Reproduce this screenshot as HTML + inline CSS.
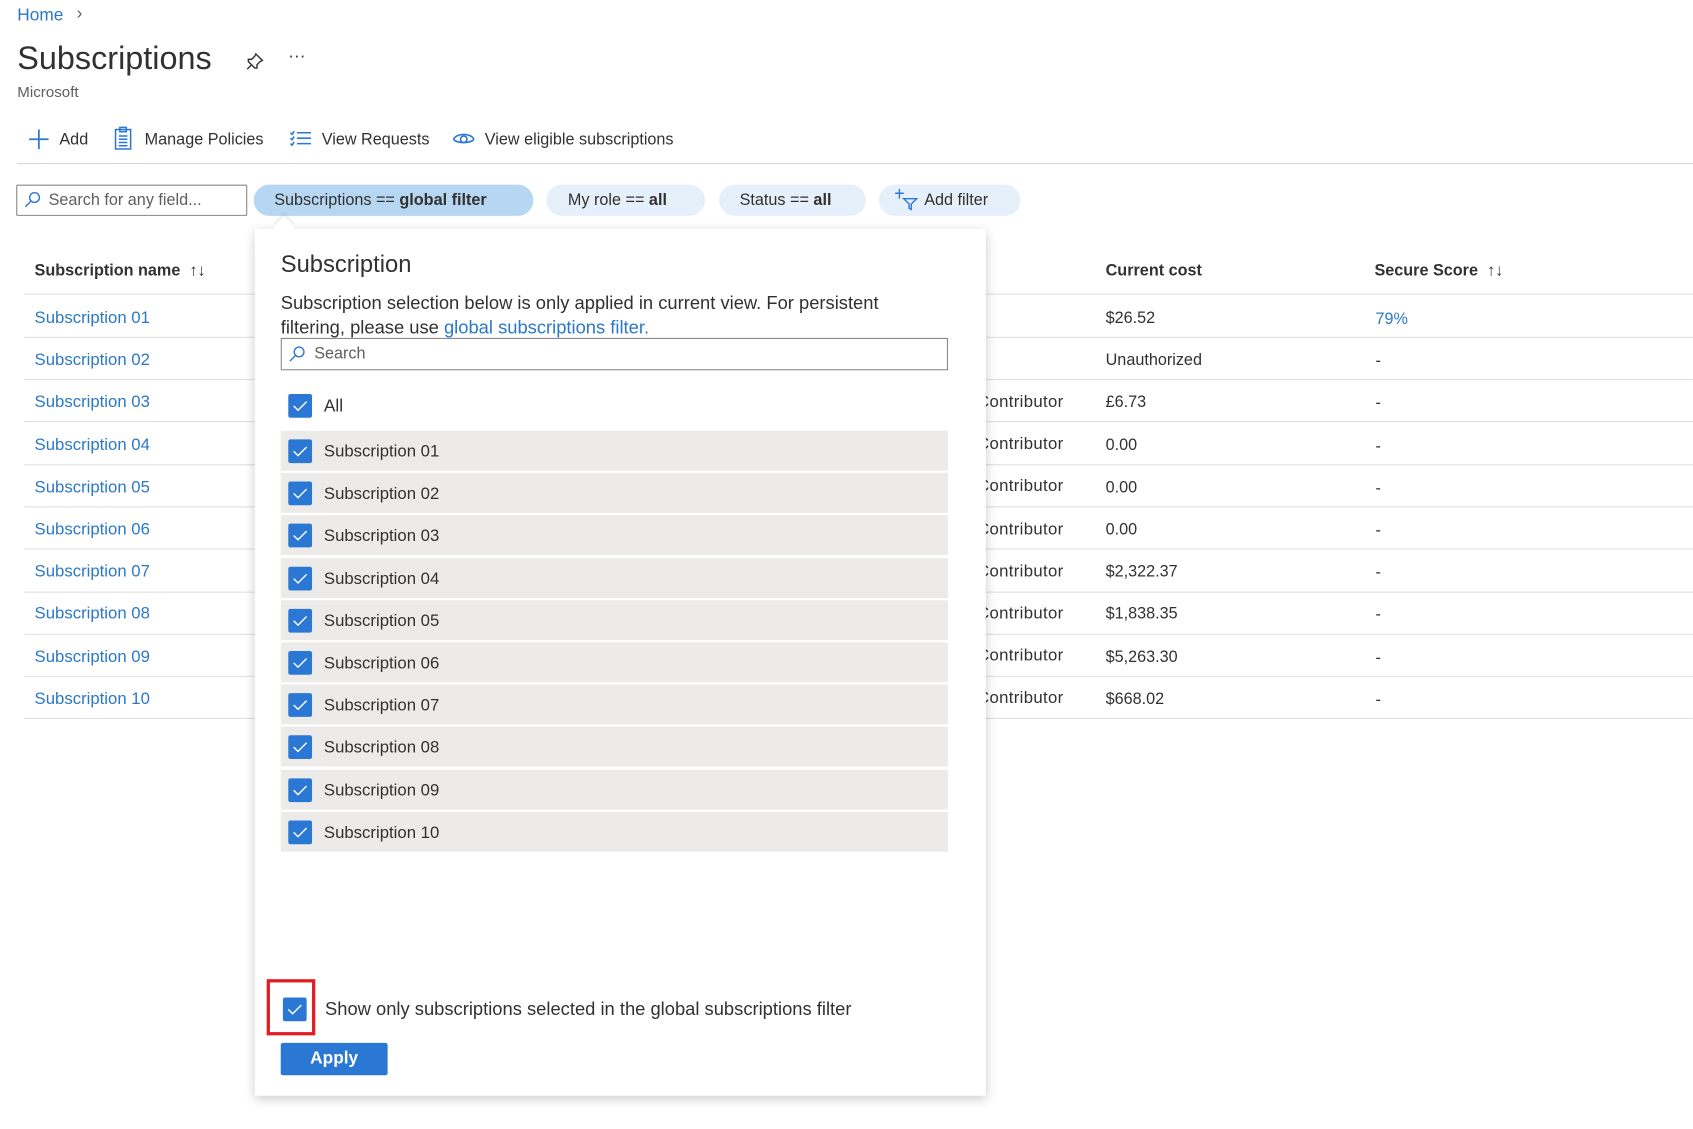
<!DOCTYPE html>
<html><head><meta charset="utf-8"><style>
html,body{margin:0;padding:0;background:#fff;overflow:hidden;width:1693px;height:1129px}
#w{position:absolute;left:0;top:0;width:1568px;height:1046px;transform:scale(1.0797,1.0796);transform-origin:0 0;font-family:"Liberation Sans",sans-serif;color:#323130;font-size:15px}
.a{position:absolute;white-space:nowrap}
.lk{color:#2b78c6}
.pill{position:absolute;top:171px;height:29px;border-radius:15px;background:#e5f0fb;line-height:29px;font-size:15px}
.sep{position:absolute;left:22px;width:1546px;height:1px;background:#e1dfdd}
.cb{position:absolute;width:22px;height:22px;border-radius:2px;background:#2b78d4}
.cb svg{position:absolute;left:4px;top:5px}
.row{position:absolute;left:260px;width:618px;height:37px;background:#edebe9}
</style></head><body><div id="w">
<div class="a lk" style="left:16px;top:6px;font-size:16px">Home</div>
<div class="a" style="left:71px;top:4px;font-size:16px;color:#605e5c">&#8250;</div>
<div class="a" style="left:16px;top:38px;font-size:30px;color:#323130">Subscriptions</div>
<svg class="a" style="left:227px;top:48px" width="18" height="18" viewBox="0 0 18 18" fill="none" stroke="#323130" stroke-width="1.3"><path d="M10 2l6 6-2 1-3 3 0 3-2 0-6-6 0-2 3 0 3-3z M6 12l-4 4"/></svg>
<div class="a" style="left:267px;top:44px;font-size:16px">···</div>
<div class="a" style="left:16px;top:77px;font-size:14px;color:#605e5c">Microsoft</div>

<svg class="a" style="left:26px;top:119px" width="20" height="20"><path d="M10 1v18M1 10h18" stroke="#2b78d4" stroke-width="1.6"/></svg>
<div class="a" style="left:55px;top:121px">Add</div>
<svg class="a" style="left:105px;top:117px" width="18" height="22" viewBox="0 0 18 22" fill="none" stroke="#2b78d4" stroke-width="1.4"><rect x="2" y="3" width="14" height="18"/><rect x="6" y="1" width="6" height="4"/><path d="M5 9h8M5 12h8M5 15h8M5 18h8"/></svg>
<div class="a" style="left:134px;top:121px">Manage Policies</div>
<svg class="a" style="left:268px;top:120px" width="21" height="18" viewBox="0 0 21 18" fill="none" stroke="#2b78d4" stroke-width="1.4"><path d="M7 3h13M7 8h13M7 13h13M1 3l1.5 1.5 2-3M1 8l1.5 1.5 2-3M1 13l1.5 1.5 2-3"/></svg>
<div class="a" style="left:298px;top:121px">View Requests</div>
<svg class="a" style="left:419px;top:121px" width="21" height="15" viewBox="0 0 21 15" fill="none" stroke="#2b78d4" stroke-width="1.5"><path d="M1 8c3-6 16-6 19 0"/><path d="M1 8c3 4 16 4 19 0"/><circle cx="10.5" cy="8" r="3"/></svg>
<div class="a" style="left:449px;top:121px">View eligible subscriptions</div>
<div class="a" style="left:16px;top:151px;width:1552px;height:1px;background:#d6d6d6"></div>

<div class="a" style="left:15px;top:171px;width:212px;height:27px;border:1px solid #8a8886;border-radius:1px"></div>
<svg class="a" style="left:22px;top:177px" width="16" height="16" fill="none" stroke="#2b78d4" stroke-width="1.3"><circle cx="10" cy="6" r="4.5"/><path d="M7 9l-5.5 5.5"/></svg>
<div class="a" style="left:45px;top:177px;color:#605e5c">Search for any field...</div>
<div class="pill" style="left:235px;width:259px;background:#b7d6f2"><span style="margin-left:19px">Subscriptions == <b>global filter</b></span></div>
<div class="pill" style="left:506px;width:147px"><span style="margin-left:20px">My role == <b>all</b></span></div>
<div class="pill" style="left:666px;width:136px"><span style="margin-left:19px">Status == <b>all</b></span></div>
<div class="pill" style="left:814px;width:131px"><span style="margin-left:42px">Add filter</span></div>
<svg class="a" style="left:828px;top:174px" width="24" height="22" fill="none" stroke="#2b78d4" stroke-width="1.3"><path d="M5 1v9M1 5h8M9 10h12l-5 5v5l-2-1v-4z"/></svg>

<div class="a" style="left:32px;top:242px;font-weight:bold;font-size:15px">Subscription name &nbsp;<span style="font-weight:normal">↑↓</span></div>
<div class="a" style="left:1024px;top:242px;font-weight:bold">Current cost</div>
<div class="a" style="left:1273px;top:242px;font-weight:bold">Secure Score &nbsp;<span style="font-weight:normal">↑↓</span></div>
<div class="sep" style="top:272px"></div>
<div class="sep" style="top:312px"></div><div class="sep" style="top:351px"></div><div class="sep" style="top:390px"></div><div class="sep" style="top:430px"></div><div class="sep" style="top:469px"></div><div class="sep" style="top:508px"></div><div class="sep" style="top:548px"></div><div class="sep" style="top:587px"></div><div class="sep" style="top:626px"></div><div class="sep" style="top:665px"></div>
<div class="a lk" style="left:32px;top:275px;line-height:39.2px;font-size:15.5px">Subscription 01<br>Subscription 02<br>Subscription 03<br>Subscription 04<br>Subscription 05<br>Subscription 06<br>Subscription 07<br>Subscription 08<br>Subscription 09<br>Subscription 10</div>
<div class="a" style="left:1024px;top:275px;line-height:39.2px">$26.52<br>Unauthorized<br>£6.73<br>0.00<br>0.00<br>0.00<br>$2,322.37<br>$1,838.35<br>$5,263.30<br>$668.02</div>
<div class="a" style="left:1274px;top:276px;line-height:39.2px"><span class="lk">79%</span><br>-<br>-<br>-<br>-<br>-<br>-<br>-<br>-<br>-</div>
<div class="a" style="left:905px;top:353px;line-height:39.2px;font-size:15.5px;letter-spacing:0.3px">Contributor<br>Contributor<br>Contributor<br>Contributor<br>Contributor<br>Contributor<br>Contributor<br>Contributor</div>

<div class="a" style="left:236px;top:212px;width:677px;height:803px;background:#fff;box-shadow:0 3px 10px rgba(0,0,0,.22)"></div>
<div class="a" style="left:256px;top:203px;width:14px;height:14px;background:#fff;transform:rotate(45deg);box-shadow:-2px -2px 3px rgba(0,0,0,.08)"></div>
<div class="a" style="left:236px;top:212px;width:677px;height:20px;background:#fff"></div>
<div class="a" style="left:260px;top:232px;font-size:22px">Subscription</div>
<div class="a" style="left:260px;top:269px;font-size:17px;line-height:23px">Subscription selection below is only applied in current view. For persistent<br>filtering, please use <span class="lk">global subscriptions filter.</span></div>
<div class="a" style="left:260px;top:313px;width:616px;height:28px;border:1px solid #8a8886"></div>
<svg class="a" style="left:267px;top:320px" width="16" height="16" fill="none" stroke="#2b78d4" stroke-width="1.3"><circle cx="10" cy="6" r="4.5"/><path d="M7 9l-5.5 5.5"/></svg>
<div class="a" style="left:291px;top:319px;color:#605e5c">Search</div>

<div class="cb" style="left:267px;top:365px"><svg width="14" height="12"><path d="M1 6l4 4 8-8" stroke="#fff" stroke-width="1.3" fill="none"/></svg></div>
<div class="a" style="left:300px;top:368px;font-size:16px">All</div>
<div id="rows"></div>
<div class="a" style="left:247px;top:907px;width:45px;height:52px;border:3px solid #e21b23;box-sizing:border-box"></div>
<div class="cb" style="left:262px;top:924px;width:22px;height:22px"><svg width="14" height="12"><path d="M1 6l4 4 8-8" stroke="#fff" stroke-width="1.3" fill="none"/></svg></div>
<div class="a" style="left:301px;top:925px;font-size:17px">Show only subscriptions selected in the global subscriptions filter</div>
<div class="a" style="left:260px;top:966px;width:99px;height:30px;background:#2b78d4;border-radius:2px;color:#fff;font-weight:bold;font-size:16px;text-align:center;line-height:30px">Apply</div>
</div>
<script>
var h='';for(var i=0;i<10;i++){var t=399+i*39.2;var n=i<9?'0'+(i+1):'10';
h+='<div class="row" style="top:'+t+'px"></div><div class="cb" style="left:267px;top:'+(t+8)+'px"><svg width="14" height="12"><path d="M1 6l4 4 8-8" stroke="#fff" stroke-width="1.3" fill="none"/></svg></div><div class="a" style="left:300px;top:'+(t+11)+'px;font-size:15.5px">Subscription '+n+'</div>';}
document.getElementById('rows').outerHTML=h;
</script>
</body></html>
